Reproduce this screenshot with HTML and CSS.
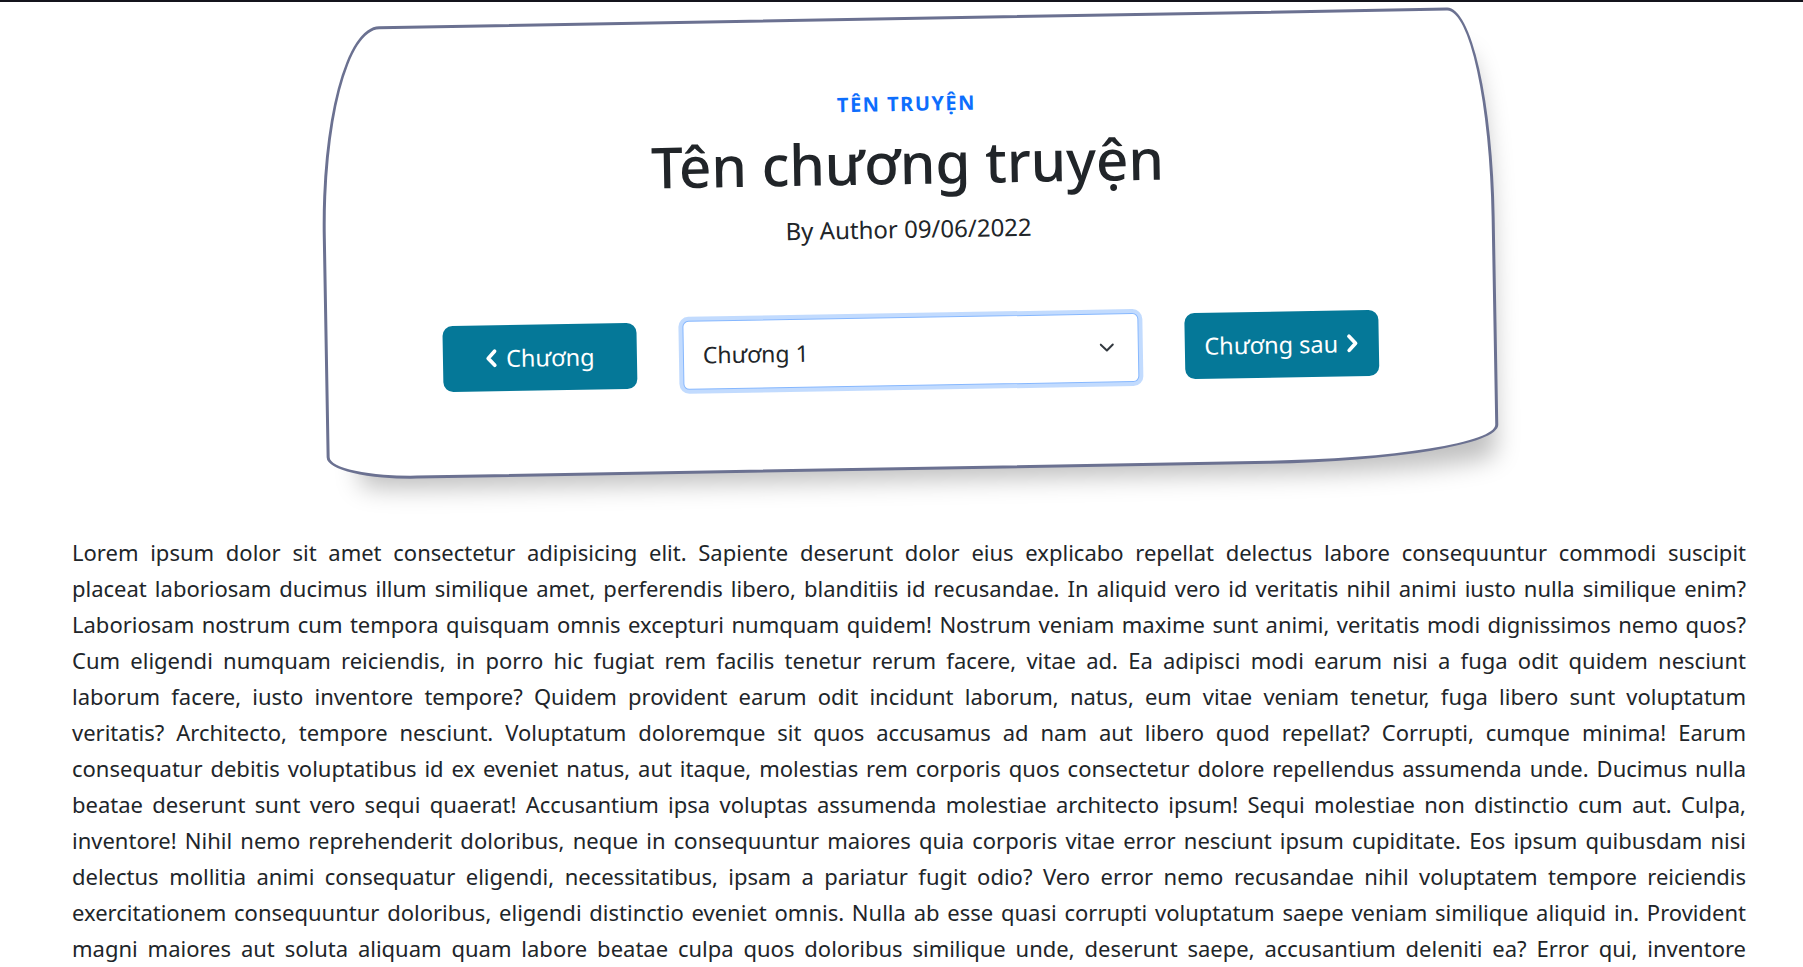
FILE: index.html
```html
<!DOCTYPE html>
<html lang="vi">
<head>
<meta charset="utf-8">
<title>Tên chương truyện</title>
<link rel="stylesheet" href="styles.css">
</head>
<body>
<div class="topline"></div>
<main class="page">
  <section class="chapter-card">
    <p class="story-name">TÊN TRUYỆN</p>
    <h1 class="chapter-title">Tên chương truyện</h1>
    <p class="chapter-meta">By Author 09/06/2022</p>
    <nav class="chapter-nav">
      <a class="nav-btn" href="#">
        <svg class="chev" viewBox="0 0 12 18" aria-hidden="true"><polyline points="9,2.5 3,9 9,15.5"/></svg>
        <span>Chương</span>
      </a>
      <div class="select-wrap">
        <select class="chapter-select">
          <option>Chương 1</option>
          <option>Chương 2</option>
          <option>Chương 3</option>
        </select>
        <svg class="select-arrow" viewBox="0 0 16 10" aria-hidden="true"><polyline points="2,2 8,8 14,2"/></svg>
      </div>
      <a class="nav-btn" href="#">
        <span>Chương sau</span>
        <svg class="chev" viewBox="0 0 12 18" aria-hidden="true"><polyline points="3,2.5 9,9 3,15.5"/></svg>
      </a>
    </nav>
  </section>

  <article class="chapter-text">
    <p>Lorem ipsum dolor sit amet consectetur adipisicing elit. Sapiente deserunt dolor eius explicabo repellat delectus labore consequuntur commodi suscipit<br>
placeat laboriosam ducimus illum similique amet, perferendis libero, blanditiis id recusandae. In aliquid vero id veritatis nihil animi iusto nulla similique enim?<br>
Laboriosam nostrum cum tempora quisquam omnis excepturi numquam quidem! Nostrum veniam maxime sunt animi, veritatis modi dignissimos nemo quos?<br>
Cum eligendi numquam reiciendis, in porro hic fugiat rem facilis tenetur rerum facere, vitae ad. Ea adipisci modi earum nisi a fuga odit quidem nesciunt<br>
laborum facere, iusto inventore tempore? Quidem provident earum odit incidunt laborum, natus, eum vitae veniam tenetur, fuga libero sunt voluptatum<br>
veritatis? Architecto, tempore nesciunt. Voluptatum doloremque sit quos accusamus ad nam aut libero quod repellat? Corrupti, cumque minima! Earum<br>
consequatur debitis voluptatibus id ex eveniet natus, aut itaque, molestias rem corporis quos consectetur dolore repellendus assumenda unde. Ducimus nulla<br>
beatae deserunt sunt vero sequi quaerat! Accusantium ipsa voluptas assumenda molestiae architecto ipsum! Sequi molestiae non distinctio cum aut. Culpa,<br>
inventore! Nihil nemo reprehenderit doloribus, neque in consequuntur maiores quia corporis vitae error nesciunt ipsum cupiditate. Eos ipsum quibusdam nisi<br>
delectus mollitia animi consequatur eligendi, necessitatibus, ipsam a pariatur fugit odio? Vero error nemo recusandae nihil voluptatem tempore reiciendis<br>
exercitationem consequuntur doloribus, eligendi distinctio eveniet omnis. Nulla ab esse quasi corrupti voluptatum saepe veniam similique aliquid in. Provident<br>
magni maiores aut soluta aliquam quam labore beatae culpa quos doloribus similique unde, deserunt saepe, accusantium deleniti ea? Error qui, inventore<br>
voluptate quisquam dolorum quas minus. Quaerat sit modi tempora iste facilis ipsa harum, aspernatur nostrum dolores molestias ratione eveniet.</p>
  </article>
</main>
</body>
</html>
```

FILE: styles.css
```css
* {
  box-sizing: border-box;
}

body {
  margin: 0;
  background: #fff;
  color: #212529;
  font-family: "Noto Sans", "Open Sans", sans-serif;
}

.topline {
  height: 2px;
  background: #14141c;
}

.page {
  padding: 0 57px 40px 72px;
}

.chapter-card {
  width: 70%;
  margin: 15px auto 0;
  padding: 69px 24px 81px;
  background: #fff;
  border: 3px solid #6b7191;
  border-radius: 60px 44px 230px 90px / 210px 210px 35px 23px;
  box-shadow: 15px 28px 25px -18px rgba(0, 0, 0, 0.25);
  transform: rotate(-1deg);
  text-align: center;
}

.story-name {
  margin: 0;
  font-size: 20px;
  font-weight: 700;
  letter-spacing: 1.5px;
  line-height: 30px;
  color: #0d6efd;
}

.chapter-title {
  margin: 10px 0 0;
  font-size: 56.5px;
  font-weight: 500;
  line-height: 1.2;
}

.chapter-meta {
  margin: 14px 0 0;
  font-size: 24px;
  line-height: 1.5;
}

.chapter-nav {
  margin-top: 70px;
  display: flex;
  justify-content: center;
  align-items: center;
  gap: 46px;
}

.nav-btn {
  width: 194px;
  height: 66px;
  display: flex;
  align-items: center;
  justify-content: center;
  gap: 8px;
  background: #057898;
  color: #fff;
  border-radius: 10px;
  text-decoration: none;
  font-size: 23.5px;
}

.chev {
  width: 13px;
  height: 20px;
  fill: none;
  stroke: #fff;
  stroke-width: 3.4;
  stroke-linecap: round;
  stroke-linejoin: round;
}

.select-wrap {
  position: relative;
  width: 456px;
}

.chapter-select {
  appearance: none;
  -webkit-appearance: none;
  display: block;
  width: 100%;
  height: 69px;
  padding: 0 48px 0 19px;
  border: 1px solid #86b7fe;
  border-radius: 6px;
  box-shadow: 0 0 0 4px rgba(13, 110, 253, 0.25);
  background: #fff;
  color: #212529;
  font-family: inherit;
  font-size: 23px;
  outline: none;
}

.select-arrow {
  position: absolute;
  right: 24px;
  top: 50%;
  width: 16px;
  height: 10px;
  transform: translateY(-50%);
  fill: none;
  stroke: #343a40;
  stroke-width: 2;
  stroke-linecap: round;
  stroke-linejoin: round;
  pointer-events: none;
}

.chapter-text p {
  margin: 64px 0 0;
  font-size: 22px;
  line-height: 36px;
  text-align: justify;
  text-align-last: justify;
}
```
